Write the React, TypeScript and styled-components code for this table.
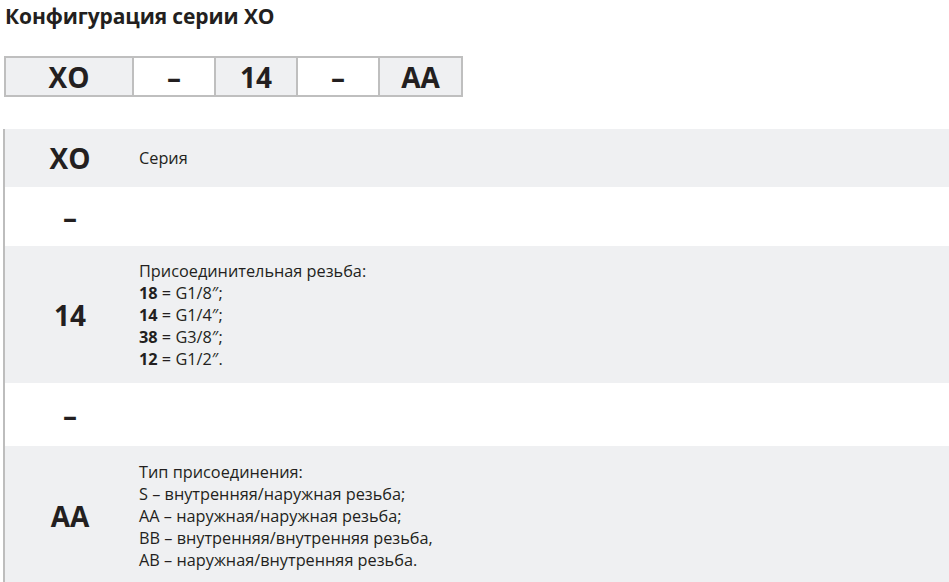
import React from "react"
import styled, { createGlobalStyle } from "styled-components"

const GlobalStyle = createGlobalStyle`
    body {
        margin: 0;
        background: #fff;
        font-family: "Open Sans", "Noto Sans", sans-serif;
        color: #231f20;
    }
`

const StyledPage = styled.div`
    width: 949px;
    height: 582px;
    overflow: hidden;
    padding-left: 3px;
    box-sizing: border-box;
`

const StyledTitle = styled.h1`
    margin: 0;
    padding: 3px 0 0 2px;
    font-size: 21px;
    line-height: 26px;
    font-weight: 700;
    letter-spacing: -0.1px;
`

const StyledCode = styled.div`
    display: flex;
    width: fit-content;
    margin: 27px 0 0 1px;
    border: 2px solid #bfbfbf;
`

const StyledCodeCell = styled.div<{ $width: number; $gray?: boolean }>`
    display: flex;
    justify-content: center;
    align-items: center;
    width: ${({ $width }) => $width}px;
    height: 37px;
    background: ${({ $gray }) => ($gray ? "#eff0f2" : "#fff")};
    border-right: 2px solid #bfbfbf;
    font-size: 28px;
    font-weight: 700;
    &:last-child {
        border-right: none;
    }
`

const StyledList = styled.div`
    margin-top: 32px;
    border-left: 2px solid #bdbdbd;
`

const StyledRow = styled.div<{ $height: number; $gray?: boolean }>`
    display: flex;
    align-items: center;
    min-height: ${({ $height }) => $height}px;
    background: ${({ $gray }) => ($gray ? "#eff0f2" : "#fff")};
`

const StyledKey = styled.div`
    width: 130px;
    flex-shrink: 0;
    text-align: center;
    font-size: 28px;
    font-weight: 700;
`

const StyledText = styled.div`
    padding-left: 4px;
    font-size: 16.3px;
    line-height: 22px;
    b {
        font-weight: 700;
    }
`

const codeCells = [
    { label: "XO", width: 126, gray: true },
    { label: "–", width: 80 },
    { label: "14", width: 80, gray: true },
    { label: "–", width: 80 },
    { label: "AA", width: 81, gray: true },
]

export default function App() {
    return <StyledPage>
        <GlobalStyle />
        <StyledTitle>Конфигурация серии XO</StyledTitle>

        <StyledCode>
            {codeCells.map((c, i) => (
                <StyledCodeCell key={i} $width={c.width} $gray={c.gray}>{c.label}</StyledCodeCell>
            ))}
        </StyledCode>

        <StyledList>
            <StyledRow $height={58} $gray>
                <StyledKey>XO</StyledKey>
                <StyledText>Серия</StyledText>
            </StyledRow>
            <StyledRow $height={59}>
                <StyledKey>–</StyledKey>
            </StyledRow>
            <StyledRow $height={137} $gray>
                <StyledKey>14</StyledKey>
                <StyledText>
                    Присоединительная резьба:<br />
                    <b>18</b> = G1/8″;<br />
                    <b>14</b> = G1/4″;<br />
                    <b>38</b> = G3/8″;<br />
                    <b>12</b> = G1/2″.
                </StyledText>
            </StyledRow>
            <StyledRow $height={63}>
                <StyledKey>–</StyledKey>
            </StyledRow>
            <StyledRow $height={140} $gray>
                <StyledKey>AA</StyledKey>
                <StyledText>
                    Тип присоединения:<br />
                    S – внутренняя/наружная резьба;<br />
                    AA – наружная/наружная резьба;<br />
                    BB – внутренняя/внутренняя резьба,<br />
                    AB – наружная/внутренняя резьба.
                </StyledText>
            </StyledRow>
        </StyledList>
    </StyledPage>
}
